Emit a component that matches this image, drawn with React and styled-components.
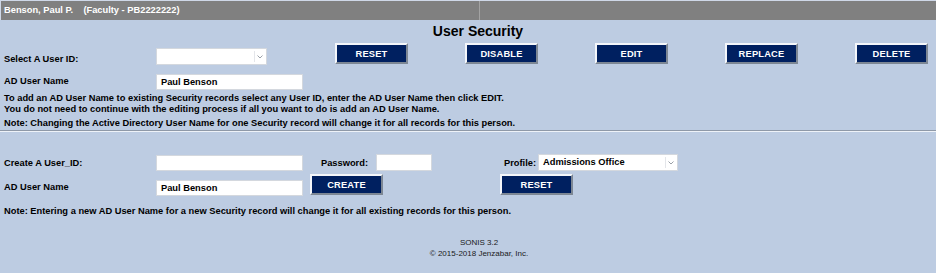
import React from "react";
import styled, { createGlobalStyle } from "styled-components";

const GlobalStyle = createGlobalStyle`
  html, body {
    margin: 0;
    padding: 0;
    background: #bdcce2;
  }
  body {
    font-family: "Liberation Sans", Arial, sans-serif;
    color: #000;
  }
`;

const Page = styled.div`
  width: 936px;
  height: 273px;
  overflow: hidden;
  background: #bdcce2;
`;

const HeaderBar = styled.div`
  display: flex;
  height: 19px;
  border-top: 1px solid #cfd8e8;
  border-left: 1px solid #cfd8e8;
  background: #808080;
`;

const HeaderCell = styled.div`
  box-sizing: border-box;
  width: ${(p) => p.$width || "auto"};
  flex: ${(p) => (p.$width ? "none" : "1")};
  border-right: ${(p) => (p.$width ? "1px solid #a3a3a3" : "none")};
  color: #fff;
  font-weight: bold;
  font-size: 9.3px;
  line-height: 19px;
  padding-left: 3px;
  white-space: pre;
`;

const Title = styled.h1`
  margin: 3px 0 0 20px;
  text-align: center;
  font-size: 14px;
  line-height: 16px;
  font-weight: bold;
`;

const TopGrid = styled.div`
  display: grid;
  grid-template-columns: 156px 179px repeat(5, 130px);
  grid-template-rows: 24px 24px;
  margin-top: 4px;
`;

const BottomGrid = styled.div`
  display: grid;
  grid-template-columns: 156px 154px 66px 124px 38px 160px;
  grid-template-rows: 21px 24px;
  margin-top: 20px;
`;

const Label = styled.div`
  font-size: 9.3px;
  font-weight: bold;
  padding-left: ${(p) => (p.$right ? "0" : "4px")};
  padding-right: ${(p) => (p.$right ? "8px" : "0")};
  text-align: ${(p) => (p.$right ? "right" : "left")};
  align-self: ${(p) => p.$align || "center"};
  margin-top: ${(p) => p.$mt || "0"};
  margin-bottom: ${(p) => p.$mb || "0"};
  white-space: nowrap;
`;

const TextBox = styled.div`
  box-sizing: border-box;
  width: ${(p) => p.$w}px;
  height: ${(p) => p.$h || 16}px;
  margin-top: ${(p) => p.$mt || 0}px;
  background: #fff;
  border: 1px solid #d4d8de;
  font-size: 9.3px;
  font-weight: bold;
  line-height: ${(p) => (p.$h || 16) - 2}px;
  padding-left: 4px;
  align-self: start;
`;

const SelectBox = styled(TextBox)`
  position: relative;
  padding-right: 14px;
  &::after {
    content: "";
    position: absolute;
    right: 0;
    top: 2px;
    bottom: 2px;
    width: 11px;
    border-left: 1px solid #e4e6ea;
  }
`;

const Chevron = styled.svg`
  position: absolute;
  right: 3px;
  top: 50%;
  margin-top: -2px;
`;

const Button = styled.button`
  box-sizing: border-box;
  width: 73px;
  height: 21px;
  margin-top: ${(p) => p.$mt || 0}px;
  align-self: start;
  background: #002060;
  color: #fff;
  font-family: "Liberation Sans", Arial, sans-serif;
  font-size: 9.3px;
  font-weight: bold;
  border: 2px solid;
  border-color: #f4f6fa #7d8794 #7d8794 #f4f6fa;
  padding: 0;
  letter-spacing: 0.2px;
  grid-column: ${(p) => p.$col || "auto"};
`;

const Notes = styled.div`
  margin-top: 2px;
  padding-left: 4px;
  font-size: 9.3px;
  font-weight: bold;
  line-height: 11px;
`;

const NoteLine = styled.div`
  margin-top: ${(p) => p.$mt || 0}px;
`;

const Rule = styled.hr`
  margin: 1px 0 0;
  border: 0;
  border-top: 1px solid #8f99a8;
  border-bottom: 1px solid #eef2f8;
  height: 0;
`;

const BottomNote = styled.div`
  margin-top: 9px;
  padding-left: 4px;
  font-size: 9.3px;
  font-weight: bold;
`;

const Footer = styled.div`
  margin-top: 21px;
  padding-left: 22px;
  text-align: center;
  font-size: 8px;
  line-height: 11px;
  color: #1a1a1a;
`;

function Select({ w, h, mt, children }) {
  return (
    <SelectBox $w={w} $h={h} $mt={mt}>
      {children}
      <Chevron width="6" height="4" viewBox="0 0 6 4">
        <path d="M0.5 0.5 L3 3 L5.5 0.5" stroke="#9aa0a8" strokeWidth="1" fill="none" />
      </Chevron>
    </SelectBox>
  );
}

export default function App() {
  return (
    <Page>
      <GlobalStyle />
      <HeaderBar>
        <HeaderCell $width="479px">{"Benson, Paul P.    (Faculty - PB2222222)"}</HeaderCell>
        <HeaderCell />
      </HeaderBar>
      <Title>User Security</Title>
      <TopGrid>
        <Label $align="end" $mb="3px">Select A User ID:</Label>
        <Select w={111} h={17} mt={5} />
        <Button>RESET</Button>
        <Button>DISABLE</Button>
        <Button>EDIT</Button>
        <Button>REPLACE</Button>
        <Button>DELETE</Button>
        <Label $mt="4px">AD User Name</Label>
        <TextBox $w={147} $mt={7}>Paul Benson</TextBox>
      </TopGrid>
      <Notes>
        <NoteLine>
          To add an AD User Name to existing Security records select any User ID, enter the AD User Name then click EDIT.
        </NoteLine>
        <NoteLine>
          You do not need to continue with the editing process if all you want to do is add an AD User Name.
        </NoteLine>
        <NoteLine $mt={3}>
          Note: Changing the Active Directory User Name for one Security record will change it for all records for this person.
        </NoteLine>
      </Notes>
      <Rule />
      <BottomGrid>
        <Label>Create A User_ID:</Label>
        <TextBox $w={147} $mt={3}></TextBox>
        <Label $right>Password:</Label>
        <TextBox $w={56} $h={17} $mt={2}></TextBox>
        <Label>Profile:</Label>
        <Select w={140} h={17} mt={2}>Admissions Office</Select>
        <Label $mt="4px">AD User Name</Label>
        <TextBox $w={147} $mt={7}>Paul Benson</TextBox>
        <Button $col="3 / span 2" $mt={1}>CREATE</Button>
        <Button $col="5 / span 2" $mt={1}>RESET</Button>
      </BottomGrid>
      <BottomNote>
        Note: Entering a new AD User Name for a new Security record will change it for all existing records for this person.
      </BottomNote>
      <Footer>
        SONIS 3.2
        <br />© 2015-2018 Jenzabar, Inc.
      </Footer>
    </Page>
  );
}
